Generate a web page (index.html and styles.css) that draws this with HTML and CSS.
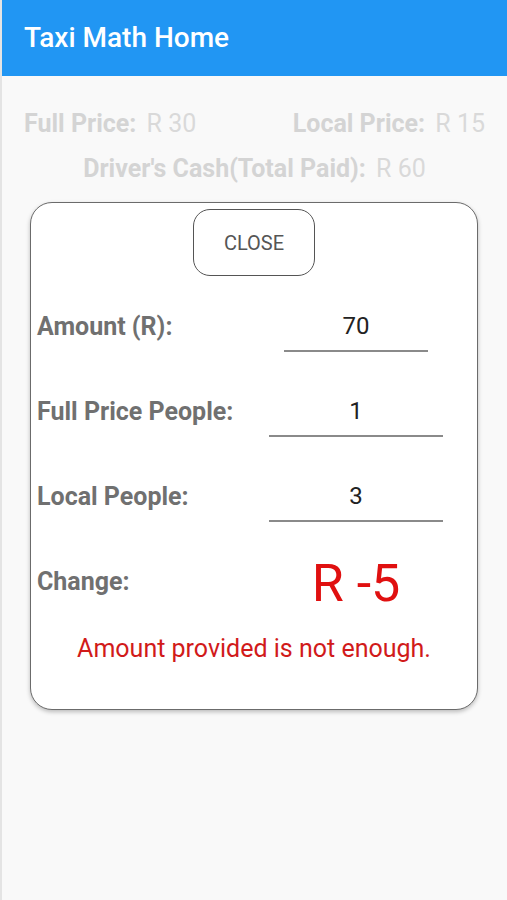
FILE: index.html
```html
<!DOCTYPE html>
<html lang="en">

<head>
  <meta charset="UTF-8">
  <meta name="viewport" content="width=device-width, initial-scale=1.0">
  <title>Taxi Math Home</title>
  <link rel="stylesheet" href="styles.css">
</head>

<body>
  <header class="app-bar">
    <h1>Taxi Math Home</h1>
  </header>

  <main class="home">
    <div class="prices">
      <p><b>Full Price:</b> R 30</p>
      <p><b>Local Price:</b> R 15</p>
    </div>
    <p class="cash"><b>Driver's Cash(Total Paid):</b> R 60</p>
  </main>

  <section class="dialog">
    <button class="close">CLOSE</button>

    <div class="row">
      <label for="amount">Amount (R):</label>
      <div class="field">
        <input id="amount" class="short" type="text" value="70">
      </div>
    </div>
    <div class="row">
      <label for="full">Full Price People:</label>
      <div class="field">
        <input id="full" type="text" value="1">
      </div>
    </div>
    <div class="row">
      <label for="local">Local People:</label>
      <div class="field">
        <input id="local" type="text" value="3">
      </div>
    </div>
    <div class="row">
      <label>Change:</label>
      <div class="field">
        <span class="change">R -5</span>
      </div>
    </div>

    <p class="error">Amount provided is not enough.</p>
  </section>
</body>

</html>
```

FILE: styles.css
```css
* {
  box-sizing: border-box;
}

body {
  margin: 0;
  font-family: Roboto, "Liberation Sans", sans-serif;
  background-color: #f9f9f9;
  border-left: 2px solid #e4e4e4;
  height: 100vh;
  position: relative;
}

.app-bar {
  background-color: #2196f3;
  height: 76px;
  display: flex;
  align-items: center;
  padding-left: 24px;
  margin-left: -2px;

  h1 {
    margin: 0;
    color: #fff;
    font-size: 28px;
    font-weight: 500;
    padding-bottom: 1px;
  }
}

.home {
  padding: 33px 22px 0;
  color: #d9d9d9;
  font-size: 25px;

  p {
    margin: 0;
  }

  b {
    font-weight: 700;
    color: #d4d4d4;
    margin-right: 4px;
  }
}

.prices {
  display: flex;
  justify-content: space-between;
}

.cash {
  text-align: center;
  margin-top: 16px !important;
}

.dialog {
  position: absolute;
  top: 202px;
  left: 28px;
  width: 448px;
  height: 508px;
  background: #fff;
  border: 1px solid #6b6b6b;
  border-radius: 22px;
  box-shadow: 0 2px 4px rgba(0, 0, 0, 0.25);
  padding: 6px 6px 0;
  display: flex;
  flex-direction: column;
}

.close {
  align-self: center;
  width: 122px;
  height: 67px;
  background: #fff;
  border: 1px solid #555;
  border-radius: 17px;
  font-family: Roboto, sans-serif;
  font-size: 20px;
  font-weight: 400;
  color: #555;
  margin-bottom: 8px;
}

.row {
  display: flex;
  align-items: center;
  height: 85px;

  label {
    flex: 1;
    font-size: 25px;
    font-weight: 700;
    color: #707070;
  }
}

.field {
  width: 174px;
  margin-right: 28px;
  display: flex;
  justify-content: center;

  input {
    width: 174px;
    height: 50px;
    border: 0;
    border-bottom: 2px solid #8a8a8a;
    text-align: center;
    font-family: Roboto, sans-serif;
    font-size: 24px;
    color: #222;
    padding: 0;
    outline: none;

    &.short {
      width: 144px;
    }
  }
}

.change {
  color: #e01010;
  font-size: 52px;
  margin-top: 4px;
}

.error {
  margin: 10px 0 0;
  text-align: center;
  color: #d11a1a;
  font-size: 25px;
}
```
